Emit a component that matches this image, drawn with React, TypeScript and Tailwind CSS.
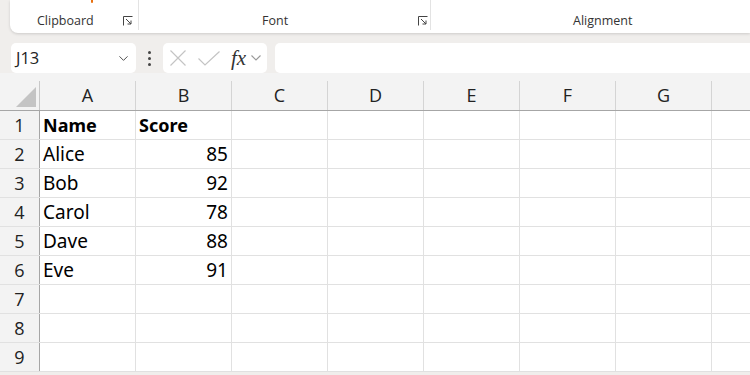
import { ChevronDown } from 'lucide-react';

const cols = ['A', 'B', 'C', 'D', 'E', 'F', 'G', ''];
const rows: [string, string][] = [
  ['Name', 'Score'],
  ['Alice', '85'],
  ['Bob', '92'],
  ['Carol', '78'],
  ['Dave', '88'],
  ['Eve', '91'],
  ['', ''],
  ['', ''],
  ['', ''],
];

function Launcher() {
  return (
    <svg width="10" height="10" viewBox="0 0 10 10" className="text-[#444] block">
      <path d="M0.5 9.5 V0.5 H9.5" fill="none" stroke="currentColor" strokeWidth="1" />
      <path d="M3 3 L8 8 M8 4.5 V8 H4.5" fill="none" stroke="currentColor" strokeWidth="1" />
    </svg>
  );
}

function App() {
  return (
    <div className="w-[750px] h-[375px] overflow-hidden bg-[#f0eeec] font-['Open_Sans',sans-serif] text-black">
      {/* Ribbon */}
      <div className="ml-[10px] h-[33px] bg-white rounded-bl-[8px] shadow-[0_1px_3px_rgba(0,0,0,0.15)] flex text-[12.5px] leading-none text-[#333] relative">
        <div className="absolute left-[81px] top-0 w-[2px] h-[3px] bg-[#e8700f] rounded-b-sm" />
        <div className="w-[128px] flex items-end pb-[6px] relative">
          <span className="ml-[27px]">Clipboard</span>
          <div className="absolute left-[113px] bottom-[7px]"><Launcher /></div>
        </div>
        <div className="w-px bg-[#e3e3e3] mb-[3px]" />
        <div className="w-[291px] flex items-end pb-[6px] relative">
          <span className="ml-[123px]">Font</span>
          <div className="absolute left-[279px] bottom-[7px]"><Launcher /></div>
        </div>
        <div className="w-px bg-[#e3e3e3] mb-[3px]" />
        <div className="flex-1 flex items-end pb-[6px]">
          <span className="ml-[142px]">Alignment</span>
        </div>
      </div>

      {/* Formula bar */}
      <div className="mt-[10px] h-[30px] flex items-stretch">
        <div className="ml-[11px] w-[125px] bg-white rounded-[5px] flex items-center justify-between pl-[5px] pr-[5px] text-[16.5px] text-[#222]">
          <span>J13</span>
          <ChevronDown size={15} strokeWidth={1.5} className="text-[#444]" />
        </div>
        <div className="w-[27px] flex flex-col items-center justify-center gap-[3px]">
          <div className="w-[3px] h-[3px] bg-[#444] rounded-full" />
          <div className="w-[3px] h-[3px] bg-[#444] rounded-full" />
          <div className="w-[3px] h-[3px] bg-[#444] rounded-full" />
        </div>
        <div className="w-[104px] bg-white rounded-[5px] flex items-center pl-[7px]">
          <svg width="16" height="16" viewBox="0 0 16 16" className="text-[#c4c4c4]">
            <path d="M0.5 0.5 L15.5 15.5 M15.5 0.5 L0.5 15.5" stroke="currentColor" strokeWidth="1.2" fill="none" />
          </svg>
          <svg width="22" height="15" viewBox="0 0 22 15" className="ml-[12px] text-[#c4c4c4]">
            <path d="M0.5 7.5 L7 14 L21.5 0.5" stroke="currentColor" strokeWidth="1.2" fill="none" />
          </svg>
          <span className="ml-[11px] font-['Liberation_Serif',serif] italic text-[21px] text-[#333] leading-none">fx</span>
          <svg width="10" height="6" viewBox="0 0 10 6" className="ml-[5px] text-[#999]">
            <path d="M0.5 0.5 L5 5 L9.5 0.5" stroke="currentColor" strokeWidth="1.1" fill="none" />
          </svg>
        </div>
        <div className="ml-[8px] flex-1 bg-white rounded-l-[5px]" />
      </div>

      {/* Grid */}
      <div className="bg-[#f3f3f3] pt-[8px]">
        <div className="flex h-[30px] border-b border-[#a6a6a6]">
          <div className="w-[40px] shrink-0 border-r border-[#c8c8c8] flex items-end justify-end pr-[3px] pb-[3px]">
            <div className="w-[20px] h-[20px] bg-[#c4c4c4] [clip-path:polygon(100%_0,100%_100%,0_100%)]" />
          </div>
          {cols.map((c, i) => (
            <div
              key={i}
              className="w-[96px] shrink-0 border-r border-[#d4d4d4] flex items-center justify-center text-[18px] text-[#222]"
            >
              {c}
            </div>
          ))}
        </div>
        <div className="bg-white">
          {rows.map((r, i) => (
            <div key={i} className="flex h-[29px] border-b border-[#e1e1e1] font-['Noto_Sans',sans-serif] text-[19px]">
              <div className="w-[40px] shrink-0 bg-[#f3f3f3] border-r border-[#a6a6a6] flex items-center justify-center font-['Open_Sans',sans-serif] text-[18px] text-[#222]">
                {i + 1}
              </div>
              <div className={`w-[96px] shrink-0 border-r border-[#e1e1e1] flex items-center pl-[3px] ${i === 0 ? 'font-bold text-[18px]' : ''}`}>
                {r[0]}
              </div>
              <div className={`w-[96px] shrink-0 border-r border-[#e1e1e1] flex items-center pr-[3px] ${i === 0 ? 'font-bold text-[18px] justify-start pl-[3px]' : 'justify-end'}`}>
                {r[1]}
              </div>
              {[0, 1, 2, 3, 4, 5].map((k) => (
                <div key={k} className="w-[96px] shrink-0 border-r border-[#e1e1e1]" />
              ))}
              <div className="flex-1" />
            </div>
          ))}
        </div>
      </div>
    </div>
  );
}

export default App;
